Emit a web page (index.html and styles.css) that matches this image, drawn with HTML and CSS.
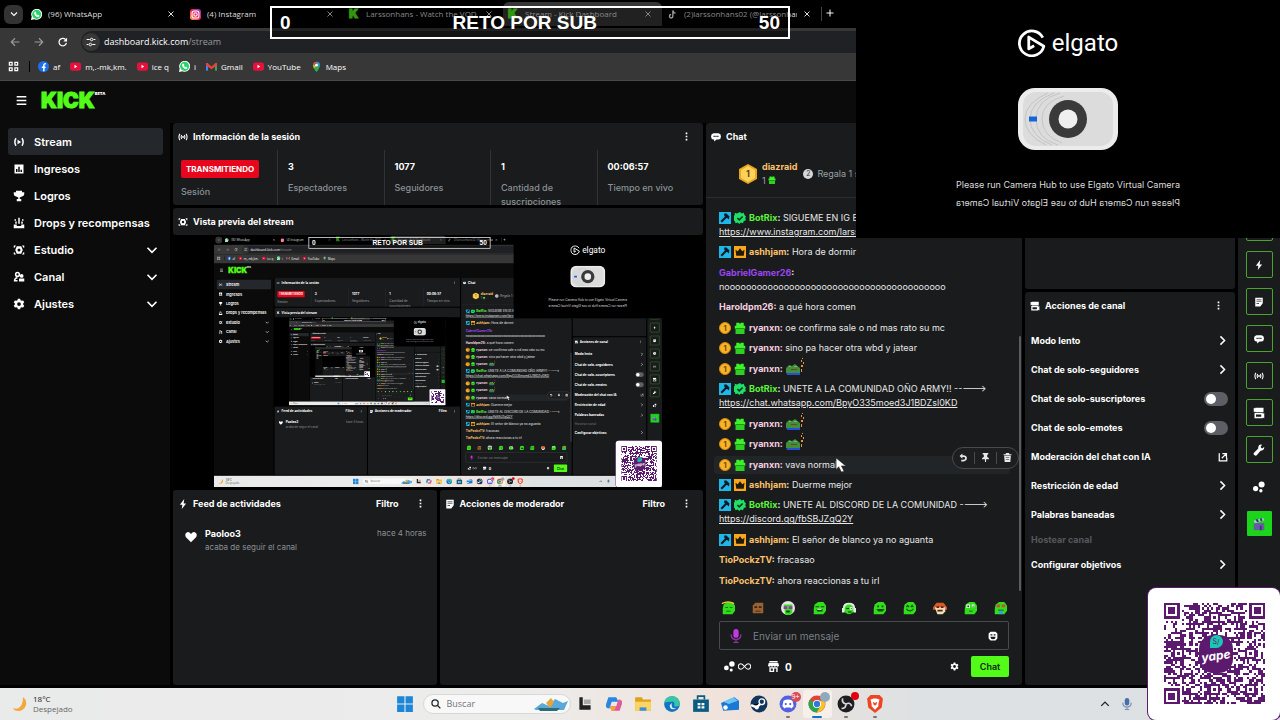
FILE: index.html
```
<!DOCTYPE html>
<html lang="es">
	<head>
		<meta charset="utf-8">
		<meta name="viewport" content="width=device-width,initial-scale=1.0" />
		<title>Stream - Kick Dashboard</title>
		<link rel="stylesheet" href="styles.css">
	</head>
	<body>
		<!-- icons -->
		<svg class="sprite" aria-hidden="true">
			<symbol id="i-live" viewBox="0 0 16 16"><path d="M4 3Q1 8 4 13M12 3Q15 8 12 13" fill="none" stroke="currentColor" stroke-width="2"/><path d="M6 5l5 3-5 3z"/></symbol>
			<symbol id="i-signal" viewBox="0 0 16 16"><path d="M3 3Q0 8 3 13M6 5Q4 8 6 11M10 5Q12 8 10 11M13 3Q16 8 13 13" fill="none" stroke="currentColor" stroke-width="1.7"/><circle cx="8" cy="8" r="1.5"/></symbol>
			<symbol id="i-chart" viewBox="0 0 16 16"><path fill-rule="evenodd" d="M2 2h12v12H2zM4 8v4h2V8zm3-3v7h2V5zm3 4v3h2V9z"/></symbol>
			<symbol id="i-cup" viewBox="0 0 16 16"><path d="M4 1h8v2h3v2q0 3-4 4l-2 1v2h2v3H5v-3h2v-2L5 9Q1 8 1 5V3h3z"/></symbol>
			<symbol id="i-drops" viewBox="0 0 16 16"><path d="M7 1h2v8H7zM2 3h2v2H2zm10 0h2v2h-2zM3 6h2v3H3zm8 0h2v3h-2zM1 10h4v2h6v-2h4v5H1z"/></symbol>
			<symbol id="i-studio" viewBox="0 0 16 16"><path fill-rule="evenodd" d="M1 2h3L2 5H1zm14 0h-3l2 3h1zM1 14h3l-2-3H1zm14 0h-3l2-3h1zM5 3h6l2 5-2 5H5L3 8zm3 3a2 2 0 100 4 2 2 0 000-4z"/></symbol>
			<symbol id="i-people" viewBox="0 0 16 16"><path d="M6 2a2.500 2.500 0 110 5 2.500 2.500 0 010-5zM2 14q0-5 4-5M2 13h4" fill="none" stroke="currentColor" stroke-width="2"/><circle cx="11.500" cy="6.500" r="2.500"/><path d="M8 14v-4h7v4z"/></symbol>
			<symbol id="i-gear" viewBox="0 0 16 16"><path fill-rule="evenodd" d="M6.500 1h3l.5 2 1.500.8 2-.6 1.500 2.600L13.500 7.200v1.600l1.500 1.400-1.500 2.600-2-.6L10 13l-.5 2h-3L6 13l-1.500-.8-2 .6L1 10.200l1.500-1.400V7.200L1 5.800l1.500-2.600 2 .6L6 3zM8 5.500a2.500 2.500 0 100 5 2.500 2.500 0 000-5z"/></symbol>
			<symbol id="i-down" viewBox="0 0 16 16"><path d="M2 5l6 6 6-6" fill="none" stroke="currentColor" stroke-width="2.200"/></symbol>
			<symbol id="i-right" viewBox="0 0 16 16"><path d="M5 2l6 6-6 6" fill="none" stroke="currentColor" stroke-width="2.200"/></symbol>
			<symbol id="i-dots" viewBox="0 0 16 16"><path d="M6.500 1h3v3h-3zm0 5.500h3v3h-3zm0 5.500h3v3h-3z"/></symbol>
			<symbol id="i-chat" viewBox="0 0 16 16"><path fill-rule="evenodd" d="M4 2h8q4 1 4 5 0 4-4 5H9l-4 3v-3H4Q0 11 0 7q0-4 4-5zm0 4v2h2V6zm3 0v2h2V6zm3 0v2h2V6z"/></symbol>
			<symbol id="i-bolt" viewBox="0 0 16 16"><path d="M10 0L3 9h4l-1 7 7-9H9z"/></symbol>
			<symbol id="i-note" viewBox="0 0 16 16"><path fill-rule="evenodd" d="M2 1h12v9l-4 5H2zM4 4v1h8V4zm0 3v1h8V7zm0 3v1h4v-1z"/></symbol>
			<symbol id="i-cards" viewBox="0 0 16 16"><path d="M3 1h11v6H3V6L1 7V1l2 1z"/><path fill-rule="evenodd" d="M2 8h11v1l2-1v7l-2-1v1H2zm2 2v3h7v-3z"/></symbol>
			<symbol id="i-wrench" viewBox="0 0 16 16"><path d="M15 4l-3 2-2-2 2-3Q8 0 7 4v2L1 12q-1 2 1 3t3 0l5-6q5 0 5-5z"/></symbol>
			<symbol id="i-bubbles" viewBox="0 0 16 16"><circle cx="11.500" cy="4.500" r="4"/><circle cx="3.500" cy="10" r="3.500"/><circle cx="10.500" cy="13" r="2.200"/></symbol>
			<symbol id="i-heart" viewBox="0 0 16 16"><path d="M8 15L1 8Q-1 3 3 1.500 6 1 8 4q2-3 5-2.500Q17 3 15 8z"/></symbol>
			<symbol id="i-undo" viewBox="0 0 16 16"><path d="M6 1v3h3q5 1 5 5.500T8 15H4v-3h4q3 0 3-2.500T8 7H6v3L1 5.500z"/></symbol>
			<symbol id="i-pin" viewBox="0 0 16 16"><path d="M3 0h10v2l-2 1v4l3 2v2H9v5H7v-5H2V9l3-2V3L3 2z"/></symbol>
			<symbol id="i-trash" viewBox="0 0 16 16"><path fill-rule="evenodd" d="M5 0h6v2h4v2H1V2h4zM2 5h12l-1 11H3zm3 3v1h6V8zm0 3v1h6v-1z"/></symbol>
			<symbol id="i-out" viewBox="0 0 16 16"><path d="M2 2v12h12V9M6 10l7-7M7 2.500h6.500V9" fill="none" stroke="currentColor" stroke-width="2"/></symbol>
			<symbol id="i-shop" viewBox="0 0 16 16"><path fill-rule="evenodd" d="M2 0h12v2H2zM1 3h14l1 4q-2 3-4 0-2 3-4 0-2 3-4 0-2 3-4 0zm1 6h12v7h-2v-5H9v5H2zm2 2v3h3v-3z"/></symbol>
			<symbol id="i-loop" viewBox="0 0 24 16"><path d="M12 8Q8 3 5.500 3a5 5 0 000 10Q8 13 12 8t6.500-5a5 5 0 010 10Q16 13 12 8z" fill="none" stroke="currentColor" stroke-width="2"/></symbol>
			<symbol id="i-mic" viewBox="0 0 16 16"><rect x="5" y="0" width="6" height="10" rx="3"/><path d="M2.500 6v2q1 4 5.500 4t5.500-4V6M8 12v3M5 15.200h6" fill="none" stroke="currentColor" stroke-width="1.400" opacity=".7"/></symbol>
			<symbol id="i-smile" viewBox="0 0 16 16"><path fill-rule="evenodd" d="M4 1h8l3 3v8l-3 3H4l-3-3V4zm0 4v2h3V5zm5 0v2h3V5zM4 9q0 4 4 4t4-4z"/></symbol>
			<symbol id="i-close" viewBox="0 0 16 16"><path d="M3 3l10 10M13 3L3 13" fill="none" stroke="currentColor" stroke-width="2"/></symbol>
			<symbol id="i-plus" viewBox="0 0 16 16"><path d="M8 1v14M1 8h14" fill="none" stroke="currentColor" stroke-width="2"/></symbol>
			<symbol id="i-back" viewBox="0 0 16 16"><path d="M15 8H2M8 2L2 8l6 6" fill="none" stroke="currentColor" stroke-width="1.800"/></symbol>
			<symbol id="i-reload" viewBox="0 0 16 16"><path d="M13.500 9.500A6 6 0 1112 4" fill="none" stroke="currentColor" stroke-width="2"/><path d="M14.500 1v6h-6z"/></symbol>
			<symbol id="i-tune" viewBox="0 0 16 16"><path d="M1 4h5M12 4h3M1 12h3M10 12h5" stroke="currentColor" stroke-width="1.800"/><circle cx="9" cy="4" r="2" fill="none" stroke="currentColor" stroke-width="1.500"/><circle cx="7" cy="12" r="2" fill="none" stroke="currentColor" stroke-width="1.500"/></symbol>
			<symbol id="i-apps" viewBox="0 0 16 16"><path d="M2 2h4v4H2zm8 0h4v4h-4zM2 10h4v4H2zm8 0h4v4h-4z" fill="none" stroke="currentColor" stroke-width="1.800"/></symbol>
			<symbol id="i-menu" viewBox="0 0 16 16"><path d="M1 2.500h14M1 8h14M1 13.500h14" stroke="currentColor" stroke-width="2"/></symbol>
			<symbol id="i-lens" viewBox="0 0 16 16"><path d="M10.500 10.500L15 15" stroke="currentColor" stroke-width="2"/><circle cx="6.500" cy="6.500" r="5" fill="none" stroke="currentColor" stroke-width="2"/></symbol>
			<symbol id="i-arrow" viewBox="0 0 12 16"><path d="M1 0v13l3-3 3 6 3-1-3-6h5z" fill="#fff" stroke="#222" stroke-width=".6"/></symbol>
			<!-- brands -->
			<symbol id="b-wa" viewBox="0 0 16 16"><path fill="#fff" d="M0 16l1-5a8 8 0 114 4z"/><circle cx="8.200" cy="7.800" r="6.600" fill="#25d366"/><path fill="#fff" d="M5 4l2 0 1 2-1 1 2 2 1-1 2 1v2Q9 13 6 9.500 3.500 7 5 4z"/></symbol>
			<linearGradient id="insta" x1="0" y1="1" x2="1" y2="0"><stop offset="0" stop-color="#fdb03c"/><stop offset=".5" stop-color="#f0245f"/><stop offset="1" stop-color="#8a3ad0"/></linearGradient>
			<symbol id="b-ig" viewBox="0 0 16 16"><rect width="16" height="16" rx="4" fill="url(#insta)"/><rect x="3" y="3" width="10" height="10" rx="3" fill="none" stroke="#fff" stroke-width="1.500"/><circle cx="8" cy="8" r="2.400" fill="none" stroke="#fff" stroke-width="1.500"/></symbol>
			<symbol id="b-tt" viewBox="0 0 16 16"><path d="M8.500 2v8.500a2.500 2.500 0 11-2.500-2.500M8.500 2q1 4 4 4" fill="none" stroke="#fff" stroke-width="2"/></symbol>
			<symbol id="b-yt" viewBox="0 0 16 16"><rect y="2" width="16" height="12" rx="3" fill="#e6103c"/><path fill="#fff" d="M6.500 5.500l4 2.500-4 2.500z"/></symbol>
			<symbol id="b-fb" viewBox="0 0 16 16"><circle cx="8" cy="8" r="8" fill="#1b6fe8"/><path d="M11.500 4Q8.500 3.500 8.500 6.500V15M5.500 9h5.500" fill="none" stroke="#fff" stroke-width="2.200"/></symbol>
			<symbol id="b-gm" viewBox="0 0 16 16"><path fill="#4285f4" d="M0 3h3v11H0z"/><path fill="#34a853" d="M13 3h3v11h-3z"/><path fill="#ea4335" d="M0 3h2l6 5 6-5h2v3l-8 6-8-6z"/></symbol>
			<symbol id="b-map" viewBox="0 0 16 16"><path fill="#34a853" d="M8 16Q3 10 3 6a5 5 0 0110 0q0 4-5 10z"/><path fill="#4285f4" d="M8 1q4 0 5 4L8 9z"/><path fill="#ea4335" d="M3 5q1-4 5-4v4z"/><path fill="#fbbc04" d="M3 5l4 3-3 3z"/><circle cx="8" cy="6" r="2" fill="#fff"/></symbol>
			<!-- chat badges -->
			<symbol id="c-mod" viewBox="0 0 16 16"><path fill="#1fb6e8" d="M0 0h16v16H0z"/><path fill="#0c1a22" d="M7 2l3 0 4 4-1 4-2-2-1 0-6 6-2-2 6-6-1-1z"/></symbol>
			<symbol id="c-ver" viewBox="0 0 16 16"><path fill="#1ee068" d="M8 0l2 2 3-1 1 3 2 2-1 2 1 3-3 1-1 3-3-1-2 2-2-2-3 1-1-3-3-1 1-3-1-2 3-2V1l3 1z"/><path d="M4.500 8l2.500 2.500L11.500 6" fill="none" stroke="#0c2c18" stroke-width="2"/></symbol>
			<symbol id="c-crown" viewBox="0 0 16 16"><path fill="#f7a81b" d="M0 0h16v16H0z"/><path fill="#221a08" d="M2 5l3 2 3-4 3 4 3-2-1 8H3z"/></symbol>
			<symbol id="c-gift" viewBox="0 0 16 16"><path fill="#3df12b" d="M3 1h4l1 2 1-2h4v4h2v4H1V5h2z"/><path fill="#2fd022" d="M2 9h12v7H2z"/><path fill="#1c8a14" d="M2 8h12v1H2z"/></symbol>
			<symbol id="c-hex" viewBox="0 0 20 20"><path fill="#e8a51f" d="M10 0l9 5v10l-9 5-9-5V5z"/><path fill="#fcd25a" d="M10 2l7 4v8l-7 4-7-4V6z"/></symbol>
			<symbol id="c-frog" viewBox="0 0 18 18"><path fill="#2550d4" d="M0 14h14v3H1z"/><path fill="#3f8f3c" d="M0 14v-4l3-3 3 1 3-2 5 4v5H0z"/><path fill="#7db46a" d="M3 8h2v1H3zm5 0h3v1H8z"/><path fill="#7a3e22" d="M5 11h6v1H5z"/><path fill="#e9903a" d="M15 2h1v2h-1zm2 2h1v2h-1zm-2 3h2v2h-2zm0 4h1v3h-1zM16 0h1v1h-1z"/></symbol>
			<!-- emotes -->
			<symbol id="e-base" viewBox="0 0 16 16"><path fill="#32dd1c" d="M3 4l4-3h6l3 4v6l-3 4H2V9z"/></symbol>
			<symbol id="e-1" viewBox="0 0 16 16"><use href="#e-base"/><path d="M1 3q7-4 14 0" stroke="#f2c53c" stroke-width="1.500" fill="none"/><path fill="#0c4a08" d="M5 7h3v1H5zm5 0h3v1h-3zm-4 4h5v1H6z"/></symbol>
			<symbol id="e-2" viewBox="0 0 16 16"><path fill="#9a6232" d="M2 5l3-3h9v12H2z"/><path fill="#3a200e" d="M4 6h3v2H4zm5 0h3v2H9zm-4 5h6v1H5z"/></symbol>
			<symbol id="e-3" viewBox="0 0 16 16"><circle cx="8" cy="8" r="8" fill="#e9e2ea"/><path fill="#32dd1c" d="M3 4h10v9l-3 3H5z"/><path fill="#a92ac0" d="M3 6h4v3H3zm6 0h4v3H9z"/><path fill="#08300a" d="M6 11h4v2H6z"/></symbol>
			<symbol id="e-4" viewBox="0 0 16 16"><use href="#e-base"/><path fill="#0c4a08" d="M4 6h4v1H4zm6 0h4v1h-4zm-5 3h7v3H6z"/><path fill="#fff" d="M6 9h5v1H6z"/></symbol>
			<symbol id="e-5" viewBox="0 0 16 16"><circle cx="8" cy="9" r="6" fill="#32dd1c"/><path fill="#e8e8e8" d="M1 8q0-6 7-6t7 6l-2 0q-1-4-5-4T3 8zM0 8h3v5H0zm13 0h3v5h-3z"/><path fill="#fff" d="M9 7h3v3H9z"/><path fill="#063a06" d="M10 8h1v1h-1zm-5 0h3v1H5zm2 4h4v1H7z"/></symbol>
			<symbol id="e-6" viewBox="0 0 16 16"><use href="#e-base"/><path fill="#0c4a08" d="M6 5h2v2H6zm5 0h2v2h-2zM5 9h9v1l-2 2H7z"/></symbol>
			<symbol id="e-7" viewBox="0 0 16 16"><use href="#e-base"/><path d="M5 7l1.500-2L8 7m2 0l1.500-2L13 7M5 9q4 5 8 0" stroke="#0c4a08" stroke-width="1.200" fill="none"/></symbol>
			<symbol id="e-8" viewBox="0 0 16 16"><path fill="#d65a2a" d="M0 7l4-5h8l4 5v3H0z"/><path fill="#f1ddb8" d="M2 7h12v5l-3 3H5z"/><path fill="#5a2613" d="M4 6h3v2H4zm5 0h3v2H9zm-4 4h6v2H5z"/></symbol>
			<symbol id="e-9" viewBox="0 0 16 16"><use href="#e-base"/><path fill="#fff" d="M4 4h4v4H4zm6 0h3v3h-3z"/><path fill="#0c4a08" d="M5 5h2v2H5zm6 0h1v2h-1zM7 11h4v1H7z"/></symbol>
			<symbol id="e-10" viewBox="0 0 16 16"><use href="#e-base"/><path fill="#d84a2f" d="M4 4h4v3H4zm6 0h4v3h-4z"/><path fill="#0c4a08" d="M6 10h6v1H6z"/><path fill="#3a9bf0" d="M7 11h4v4H7z"/></symbol>
		</svg>

		<div class="screen">
			<div class="tabs">
				<button class="tabMenu" aria-label="Buscar pestañas"><svg class="ic s8"><use href="#i-down"/></svg></button>
				<div class="tab"><svg class="ic s11"><use href="#b-wa"/></svg><span>(96) WhatsApp</span><svg class="ic s8"><use href="#i-close"/></svg></div>
				<div class="tab"><svg class="ic s11"><use href="#b-ig"/></svg><span>(4) Instagram</span><svg class="ic s8"><use href="#i-close"/></svg></div>
				<div class="tab"><b class="k">K</b><span>Larssonhans - Watch the VOD</span><svg class="ic s8"><use href="#i-close"/></svg></div>
				<div class="tab active"><b class="k">K</b><span>Stream - Kick Dashboard</span><svg class="ic s8"><use href="#i-close"/></svg></div>
				<div class="tab"><svg class="ic s11"><use href="#b-tt"/></svg><span>(2)larssonhans02 (@larssonhans</span><svg class="ic s8"><use href="#i-close"/></svg></div>
				<button class="newTab" aria-label="Nueva pestaña"><svg class="ic s8"><use href="#i-plus"/></svg></button>
			</div>
			<div class="toolbar">
				<svg class="ic s10 dim"><use href="#i-back"/></svg>
				<svg class="ic s10 dim flip"><use href="#i-back"/></svg>
				<svg class="ic s10"><use href="#i-reload"/></svg>
				<div class="url"><i><svg class="ic s10"><use href="#i-tune"/></svg></i><span>dashboard.kick.com<em>/stream</em></span></div>
			</div>
			<div class="bookmarks">
				<svg class="ic s11"><use href="#i-apps"/></svg>
				<i class="bar"></i>
				<a href="#"><svg class="ic s11"><use href="#b-fb"/></svg>af</a>
				<a href="#"><svg class="ic s11"><use href="#b-yt"/></svg>m,.-mk,km.</a>
				<a href="#"><svg class="ic s11"><use href="#b-yt"/></svg>ice q</a>
				<a href="#"><svg class="ic s11"><use href="#b-wa"/></svg>i</a>
				<a href="#"><svg class="ic s11"><use href="#b-gm"/></svg>Gmail</a>
				<a href="#"><svg class="ic s11"><use href="#b-yt"/></svg>YouTube</a>
				<a href="#"><svg class="ic s11"><use href="#b-map"/></svg>Maps</a>
			</div>

			<div class="header">
				<svg class="ic s11"><use href="#i-menu"/></svg>
				<div class="logo">KICK<sup>BETA</sup></div>
			</div>

			<div class="main">
				<ul class="side">
					<li class="active"><svg class="ic s12"><use href="#i-live"/></svg><span>Stream</span></li>
					<li><svg class="ic s12"><use href="#i-chart"/></svg><span>Ingresos</span></li>
					<li><svg class="ic s12"><use href="#i-cup"/></svg><span>Logros</span></li>
					<li><svg class="ic s12"><use href="#i-drops"/></svg><span>Drops y recompensas</span></li>
					<li><svg class="ic s12"><use href="#i-studio"/></svg><span>Estudio</span><svg class="ic s12"><use href="#i-down"/></svg></li>
					<li><svg class="ic s12"><use href="#i-people"/></svg><span>Canal</span><svg class="ic s12"><use href="#i-down"/></svg></li>
					<li><svg class="ic s12"><use href="#i-gear"/></svg><span>Ajustes</span><svg class="ic s12"><use href="#i-down"/></svg></li>
				</ul>

				<div class="center">
					<div class="panel info">
						<h2><svg class="ic s10"><use href="#i-signal"/></svg><span>Información de la sesión</span><svg class="ic s9"><use href="#i-dots"/></svg></h2>
						<div class="stats">
							<div class="stat"><span class="onair">TRANSMITIENDO</span><p>Sesión</p></div>
							<div class="stat"><b>3</b><p>Espectadores</p></div>
							<div class="stat"><b>1077</b><p>Seguidores</p></div>
							<div class="stat"><b>1</b><p>Cantidad de suscripciones</p></div>
							<div class="stat"><b>00:06:57</b><p>Tiempo en vivo</p></div>
						</div>
					</div>
					<div class="preview">
						<h2 class="panel"><svg class="ic s10"><use href="#i-studio"/></svg><span>Vista previa del stream</span></h2>
						<div class="video"><div class="thumb"></div></div>
					</div>
					<div class="feeds">
						<div class="panel">
							<h2><svg class="ic s10"><use href="#i-bolt"/></svg><span>Feed de actividades</span><button>Filtro</button><svg class="ic s9"><use href="#i-dots"/></svg></h2>
							<div class="event">
								<svg class="ic s12"><use href="#i-heart"/></svg>
								<div><b>Paoloo3</b><p>acaba de seguir el canal</p></div>
								<time>hace 4 horas</time>
							</div>
						</div>
						<div class="panel">
							<h2><svg class="ic s10"><use href="#i-note"/></svg><span>Acciones de moderador</span><button>Filtro</button><svg class="ic s9"><use href="#i-dots"/></svg></h2>
						</div>
					</div>
				</div>

				<div class="panel chat">
					<h2><svg class="ic s10"><use href="#i-chat"/></svg><span>Chat</span></h2>
					<div class="ranking">
						<i class="hex"><svg class="ic s20"><use href="#c-hex"/></svg><b>1</b></i>
						<div><b class="gold">diazraid</b><p>1 <svg class="ic s8"><use href="#c-gift"/></svg></p></div>
						<i class="second">2</i>
						<span>Regala 1 su</span>
					</div>
					<ul class="msgs">
						<li><svg class="badge"><use href="#c-mod"/></svg><svg class="badge"><use href="#c-ver"/></svg><b class="green">BotRix</b><b>:</b> SIGUEME EN IG BEB<br><a href="#">https://www.instagram.com/larsson</a></li>
						<li><svg class="badge"><use href="#c-mod"/></svg><svg class="badge"><use href="#c-crown"/></svg><b class="gold">ashhjam</b><b>:</b> Hora de dormir</li>
						<li><b class="violet">GabrielGamer26</b><b>:</b><br>nooooooooooooooooooooooooooooooooooooooooo</li>
						<li><b class="pink">Haroldpm26:</b> a qué hora comen</li>
						<li><i class="coin">1</i><svg class="badge"><use href="#c-gift"/></svg><b class="pink">ryanxn:</b> oe confirma sale o nd mas rato su mc</li>
						<li><i class="coin">1</i><svg class="badge"><use href="#c-gift"/></svg><b class="pink">ryanxn:</b> sino pa hacer otra wbd y jatear</li>
						<li><i class="coin">1</i><svg class="badge"><use href="#c-gift"/></svg><b class="pink">ryanxn:</b> <svg class="frog"><use href="#c-frog"/></svg></li>
						<li><svg class="badge"><use href="#c-mod"/></svg><svg class="badge"><use href="#c-ver"/></svg><b class="green">BotRix</b><b>:</b> UNETE A LA COMUNIDAD OÑO ARMY!! -----&gt;<br><a href="#">https://chat.whatsapp.com/BpyO335moed3J1BDZsl0KD</a></li>
						<li><i class="coin">1</i><svg class="badge"><use href="#c-gift"/></svg><b class="pink">ryanxn:</b> <svg class="frog"><use href="#c-frog"/></svg></li>
						<li><i class="coin">1</i><svg class="badge"><use href="#c-gift"/></svg><b class="pink">ryanxn:</b> <svg class="frog"><use href="#c-frog"/></svg></li>
						<li class="hover"><i class="coin">1</i><svg class="badge"><use href="#c-gift"/></svg><b class="pink">ryanxn:</b> vava normal<svg class="cursor"><use href="#i-arrow"/></svg>
							<div class="tools">
								<button aria-label="Responder"><svg class="ic s9"><use href="#i-undo"/></svg></button>
								<button aria-label="Fijar"><svg class="ic s9"><use href="#i-pin"/></svg></button>
								<button aria-label="Borrar"><svg class="ic s9"><use href="#i-trash"/></svg></button>
							</div>
						</li>
						<li><svg class="badge"><use href="#c-mod"/></svg><svg class="badge"><use href="#c-crown"/></svg><b class="gold">ashhjam</b><b>:</b> Duerme mejor</li>
						<li><svg class="badge"><use href="#c-mod"/></svg><svg class="badge"><use href="#c-ver"/></svg><b class="green">BotRix</b><b>:</b> UNETE AL DISCORD DE LA COMUNIDAD ----&gt;<br><a href="#">https://discord.gg/fbSBJZqQ2Y</a></li>
						<li><svg class="badge"><use href="#c-mod"/></svg><svg class="badge"><use href="#c-crown"/></svg><b class="gold">ashhjam</b><b>:</b> El señor de blanco ya no aguanta</li>
						<li><b class="gold">TioPockzTV</b><b>:</b> fracasao</li>
						<li><b class="gold">TioPockzTV</b><b>:</b> ahora reaccionas a tu irl</li>
					</ul>
					<div class="emotes">
						<svg><use href="#e-1"/></svg><svg><use href="#e-2"/></svg><svg><use href="#e-3"/></svg><svg><use href="#e-4"/></svg><svg><use href="#e-5"/></svg><svg><use href="#e-6"/></svg><svg><use href="#e-7"/></svg><svg><use href="#e-8"/></svg><svg><use href="#e-9"/></svg><svg><use href="#e-10"/></svg>
					</div>
					<label class="write">
						<svg class="ic s14 mic"><use href="#i-mic"/></svg>
						<input type="text" placeholder="Enviar un mensaje" aria-label="Enviar un mensaje">
						<svg class="ic s10"><use href="#i-smile"/></svg>
					</label>
					<div class="send">
						<svg class="ic s11"><use href="#i-bubbles"/></svg>
						<svg class="loop"><use href="#i-loop"/></svg>
						<svg class="ic s11 shop"><use href="#i-shop"/></svg>
						<b>0</b>
						<svg class="ic s9"><use href="#i-gear"/></svg>
						<button>Chat</button>
					</div>
					<i class="scroll"></i>
				</div>

				<div class="right">
					<div class="panel"></div>
					<div class="panel actions">
						<h2><svg class="ic s10"><use href="#i-cards"/></svg><span>Acciones de canal</span><svg class="ic s9"><use href="#i-dots"/></svg></h2>
						<ul>
							<li><span>Modo lento</span><svg class="ic s11"><use href="#i-right"/></svg></li>
							<li><span>Chat de solo-seguidores</span><svg class="ic s11"><use href="#i-right"/></svg></li>
							<li><label>Chat de solo-suscriptores<input type="checkbox" class="toggle"></label></li>
							<li><label>Chat de solo-emotes<input type="checkbox" class="toggle"></label></li>
							<li><span>Moderación del chat con IA</span><svg class="ic s10"><use href="#i-out"/></svg></li>
							<li><span>Restricción de edad</span><svg class="ic s11"><use href="#i-right"/></svg></li>
							<li><span>Palabras baneadas</span><svg class="ic s11"><use href="#i-right"/></svg></li>
							<li class="off"><span>Hostear canal</span></li>
							<li><span>Configurar objetivos</span><svg class="ic s11"><use href="#i-right"/></svg></li>
						</ul>
					</div>
				</div>

				<div class="panel rail">
					<button aria-label="Información"><svg class="ic s10"><use href="#i-signal"/></svg></button>
					<button aria-label="Vista previa"><svg class="ic s10"><use href="#i-studio"/></svg></button>
					<button aria-label="Canal"><svg class="ic s10"><use href="#i-people"/></svg></button>
					<button aria-label="Feed"><svg class="ic s10"><use href="#i-bolt"/></svg></button>
					<button aria-label="Moderador"><svg class="ic s10"><use href="#i-note"/></svg></button>
					<button aria-label="Chat"><svg class="ic s10"><use href="#i-chat"/></svg></button>
					<button aria-label="Sesión"><svg class="ic s10"><use href="#i-signal"/></svg></button>
					<button aria-label="Acciones"><svg class="ic s12"><use href="#i-cards"/></svg></button>
					<button aria-label="Herramientas"><svg class="ic s12"><use href="#i-wrench"/></svg></button>
					<button class="plain" aria-label="Burbujas"><svg class="ic s12"><use href="#i-bubbles"/></svg></button>
					<button class="clip" aria-label="Clips"><svg class="ic s14" viewBox="0 0 16 16"><path fill="#6b5aa8" d="M2 7h12v8H2z"/><path fill="#8fd8b8" d="M2 4l11-3 1 3L3 7z"/><path fill="#3b3470" d="M4 3l2 3 2-1-2-3zm5-1l1 3 2-1-1-3zM9 10h2v5H9z"/></svg></button>
				</div>
			</div>

			<div class="taskbar">
				<div class="weather">
					<svg class="moon" viewBox="0 0 16 16"><path fill="#f5a83a" d="M11 1q4 3 3 8-2 6-8 6-4 0-5-3 4 2 7-1t3-10z"/></svg>
					<div>18°C<p>Despejado</p></div>
				</div>
				<div class="apps">
					<i><svg viewBox="0 0 16 16"><path fill="#1c86d8" d="M1 1h6.500v6.500H1zM8.500 1H15v6.500H8.500zM1 8.500h6.500V15H1zM8.500 8.500H15V15H8.500z"/></svg></i>
					<label class="search"><svg class="ic s10"><use href="#i-lens"/></svg><input type="text" placeholder="Buscar" aria-label="Buscar"><svg class="scene" viewBox="0 0 34 16"><path fill="#5aa9d8" d="M0 13l8-6 7 3 6-7 8 4 5-2-4 9H2z"/><path fill="#e5a53a" d="M12 7l5-5 3 4-4 6z"/><path fill="#2c6c78" d="M4 12h22l-3 3H6z"/></svg></label>
					<i><svg viewBox="0 0 16 16"><path fill="#222" d="M3 2h3v7h7v4H3z"/><path fill="#aaa" d="M7 4h6v4H7z"/></svg></i>
					<i><svg viewBox="0 0 16 16"><path fill="#2a86e0" d="M3 2h7l2 4H6L4 12Q0 12 1 8z"/><path fill="#e05a9a" d="M13 14H6l-2-4h6l2-6q4 0 3 4z"/><path fill="#f2a33a" d="M6 14l-2-4h6l-2 4z"/></svg></i>
					<i><svg viewBox="0 0 16 16"><path fill="#e0a11c" d="M1 2h6l1 2h7v10H1z"/><path fill="#fcd462" d="M1 6h14v8H1z"/><path fill="#3a8ee0" d="M5 11h6v3H5z"/></svg></i>
					<i><svg viewBox="0 0 16 16"><circle cx="8" cy="8" r="7" fill="#1474c4"/><path fill="#37c7a4" d="M1 7q1-6 7-6t7 6q0 4-5 3 1-5-3-4-4 0-6 1z"/><path fill="#e8f4f8" d="M8 7q-2 5 4 5-6 2-6-3z"/></svg></i>
					<i><svg viewBox="0 0 16 16"><path fill="#0b5c82" d="M1 4h14v11H1z"/><path fill="none" stroke="#0b5c82" stroke-width="1.500" d="M5 4V1h6v3"/><path fill="#fff" d="M5 7h2.500v2H5zM8.500 7H11v2H8.500zM5 10h2.500v2H5zM8.500 10H11v2H8.500z"/></svg></i>
					<i><svg viewBox="0 0 16 16"><path fill="#1b78d4" d="M0 7l12-5 4 3v8L2 14z"/><path fill="#6cc4f4" d="M2 6l9-4 4 3-8 3z"/><circle cx="4" cy="11" r="2" fill="#fff"/></svg></i>
					<i><svg viewBox="0 0 16 16"><circle cx="8" cy="8" r="7.500" fill="#12355c"/><path stroke="#fff" stroke-width="2" d="M1 9l5 2 4-4"/><circle cx="10.500" cy="6" r="2.500" fill="#12355c" stroke="#fff" stroke-width="1.200"/><circle cx="6" cy="11" r="1.800" fill="#fff"/></svg></i>
					<i class="open"><svg viewBox="0 0 16 16"><circle cx="8" cy="8" r="7.500" fill="#5361e0"/><path fill="#fff" d="M4 5q4-2 8 0l1 5-2 2-1-1H6l-1 1-2-2z"/><circle cx="6" cy="8" r="1" fill="#5361e0"/><circle cx="10" cy="8" r="1" fill="#5361e0"/></svg><small>9+</small></i>
					<i class="current"><svg viewBox="0 0 16 16"><circle cx="8" cy="8" r="7.500" fill="#e04434"/><path fill="#2da452" d="M8 8L1.500 4.200A7.500 7.500 0 008 15.500L11 10z"/><path fill="#f7c428" d="M8 8l3 2-3.200 5.500A7.500 7.500 0 0014.500 5H8z"/><circle cx="8" cy="8" r="3.600" fill="#fff"/><circle cx="8" cy="8" r="2.800" fill="#3078e0"/></svg><small></small></i>
					<i class="open rec"><svg viewBox="0 0 16 16"><circle cx="8" cy="8" r="7.500" fill="#1e1e22"/><path d="M8 8Q4 7 5 3M8 8q4-2 5 2M8 8q0 4-4 4" fill="none" stroke="#d8d8d8" stroke-width="1.500"/></svg><small></small></i>
					<i class="open"><svg viewBox="0 0 16 16"><path fill="#ee4423" d="M4 0h8l3 3-1 8-6 5-6-5-1-8z"/><path fill="#fff" d="M4 4l3-1h2l3 1-1 4 0 2-3 3-3-3V8z"/><path fill="#ee4423" d="M6 6l2 1 2-1-1 3H7z"/></svg></i>
				</div>
				<div class="tray"><svg class="ic s10 up"><use href="#i-down"/></svg><svg class="ic s12"><use href="#i-mic"/></svg></div>
			</div>

			<!-- stream overlays -->
			<div class="facecam">
				<div class="brand"><svg viewBox="0 0 26 26"><path d="M23 8A11.500 11.500 0 1024 16L10 7.500v11l5-3" fill="none" stroke="#fff" stroke-width="2.600" stroke-linejoin="round"/></svg><span>elgato</span></div>
				<svg class="camera" viewBox="0 0 100 62">
					<rect width="100" height="62" rx="17" fill="#ececec"/>
					<rect x="5" y="4" width="90" height="54" rx="13" fill="#dcdcdd"/>
					<g fill="none" stroke="#c4c5c6" stroke-width="1"><path d="M42 5Q18 12 18 31t22 26M36 5Q12 14 12 31t22 26M30 5Q7 15 7 31t21 26M46 8Q24 14 24 31t20 24"/></g>
					<circle cx="50" cy="31" r="19" fill="#3a3a3b"/><circle cx="50" cy="31" r="9.500" fill="#efefef"/>
					<rect x="11" y="28.500" width="8" height="5" fill="#1565d8"/>
				</svg>
				<p>Please run Camera Hub to use Elgato Virtual Camera</p>
				<p class="mirror">Please run Camera Hub to use Elgato Virtual Camera</p>
			</div>
			<div class="goal"><span>0</span><span>RETO POR SUB</span><span>50</span></div>
			<div class="yape">
				<svg viewBox="0 0 45 45" shape-rendering="crispEdges"><path class="qr" fill="#5b1a6e"/></svg>
				<div class="yapeLogo"><i>S/</i><b>yape</b></div>
			</div>
		</div>

		<script>
			// QR: three finders, alignment marks and filled modules
			var size = 45
			var seed = 7
			var finders = [[0, 0], [38, 0], [0, 38]]
			var marks = [[22, 6], [6, 22], [38, 22], [22, 38], [38, 38]]

			var random = function() {
				seed = (seed * 16807) % 2147483647
				return seed / 2147483647
			}

			var isDark = function(x, y) {
				var noise = random() < 0.52
				for (var i = 0; i < finders.length; i++) {
					var r = Math.max(Math.abs(x - finders[i][0] - 3), Math.abs(y - finders[i][1] - 3))
					if (r < 5) {
						return r < 2 || r == 3
					}
				}
				for (var j = 0; j < marks.length; j++) {
					var m = Math.max(Math.abs(x - marks[j][0]), Math.abs(y - marks[j][1]))
					if (m < 3) {
						return m != 1
					}
				}
				return noise
			}

			var d = ''
			for (var y = 0; y < size; y++) {
				for (var x = 0; x < size; x++) {
					if (isDark(x, y)) {
						d += 'M' + x + ' ' + y + 'h1v1h-1z'
					}
				}
			}
			document.querySelector('.qr').setAttribute('d', d)

			// the preview shows the screen itself, three times deep
			var source = document.querySelector('.screen').cloneNode(true)

			var showPreview = function(thumb, depth) {
				var copy = source.cloneNode(true)
				copy.setAttribute('aria-hidden', 'true')
				copy.inert = true
				copy.style.width = window.innerWidth + 'px'
				copy.style.transform = 'scale(' + thumb.clientWidth / window.innerWidth + ')'
				thumb.replaceChildren(copy)
				if (depth > 1) {
					showPreview(copy.querySelector('.thumb'), depth - 1)
				}
			}

			showPreview(document.querySelector('.thumb'), 3)
			window.addEventListener('resize', function() {
				showPreview(document.querySelector('.thumb'), 3)
			})
		</script>
	</body>
</html>
```
FILE: styles.css
```
*{
	padding: 0;
	margin: 0;
	box-sizing: border-box;
}
body{
	background-color: #000;
	color: #fff;
	font-family: Inter, "Liberation Sans", sans-serif;
	font-size: 9px;
	line-height: 14px;
}
ul{
	list-style: none;
}
i, em{
	font-style: normal;
}
a{
	color: inherit;
}
button{
	border: none;
	background: none;
	color: inherit;
	font: inherit;
	cursor: pointer;
}
input{
	min-width: 0;
	flex: 1;
	border: none;
	outline: none;
	background: none;
	color: inherit;
	font: inherit;
}
.sprite{
	position: absolute;
	width: 0;
	height: 0;
}
.screen{
	position: relative;
	height: 100vh;
	min-height: 600px;
	display: flex;
	flex-direction: column;
	overflow: hidden;
	background-color: #000;
}

/* icons */
.ic{
	flex: none;
	fill: currentColor;
}
.s8{ width: 8px; height: 8px; }
.s9{ width: 9px; height: 9px; }
.s10{ width: 10px; height: 10px; }
.s11{ width: 11px; height: 11px; }
.s12{ width: 12px; height: 12px; }
.s14{ width: 14px; height: 14px; }
.s20{ width: 20px; height: 20px; }
.flip{
	transform: rotate(180deg);
}
.up{
	transform: rotate(180deg);
}

/* browser */
.tabs, .toolbar, .bookmarks{
	flex: none;
	display: flex;
	align-items: center;
	font-family: "Open Sans", "Noto Sans", sans-serif;
	font-size: 8px;
}
.tabs{
	height: 28px;
	padding-left: 4px;
}
.tabMenu{
	width: 19px;
	height: 19px;
	margin-right: 3px;
	border-radius: 6px;
	background-color: #333;
	display: flex;
	align-items: center;
	justify-content: center;
}
.tab{
	width: 159px;
	height: 24px;
	padding: 0 10px 0 5px;
	display: flex;
	align-items: center;
	gap: 6px;
	border-radius: 6px 6px 0 0;
	color: #ddd;
}
.tab span{
	flex: 1;
	overflow: hidden;
	white-space: nowrap;
}
.tab.active{
	background-color: #373737;
}
.k{
	width: 11px;
	font: 900 12px/14px Inter, sans-serif;
	color: #53fc18;
	-webkit-text-stroke: 1px #53fc18;
}
.newTab{
	padding-left: 4px;
	height: 14px;
	border-left: 1px solid #444;
}
.toolbar{
	height: 27px;
	padding-left: 10px;
	gap: 14px;
	background-color: #373737;
	font-size: 9px;
}
.dim{
	opacity: .5;
}
.url{
	flex: 1;
	height: 22px;
	margin-left: -1px;
	padding-left: 1px;
	display: flex;
	align-items: center;
	gap: 4px;
	border-radius: 11px 0 0 11px;
	background-color: #202124;
}
.url i{
	width: 18px;
	height: 18px;
	border-radius: 9px;
	background-color: #373737;
	display: flex;
	align-items: center;
	justify-content: center;
}
.url em{
	color: #999;
}
.bookmarks{
	height: 26px;
	padding: 0 0 2px 8px;
	gap: 10px;
	background-color: #373737;
	border-bottom: 1px solid #484848;
}
.bookmarks a{
	display: flex;
	align-items: center;
	gap: 4px;
	text-decoration: none;
}
.bar{
	width: 1px;
	height: 11px;
	margin-right: -2px;
	background-color: #000;
}

/* dashboard */
.header{
	flex: none;
	height: 42px;
	padding: 0 0 3px 16px;
	display: flex;
	align-items: center;
	gap: 14px;
	background-color: #0b0b0b;
}
.logo{
	display: flex;
	font-size: 21px;
	line-height: 24px;
	font-weight: 900;
	color: #53fc18;
	-webkit-text-stroke: 1px #53fc18;
}
.logo sup{
	font-size: 4px;
	line-height: 10px;
	color: #fff;
	-webkit-text-stroke: 0;
}
.main{
	flex: 1;
	min-height: 0;
	padding-bottom: 3px;
	display: grid;
	grid-template-columns: 170px minmax(0, 530fr) minmax(0, 316fr) minmax(0, 210fr) 42px;
	grid-template-rows: 100%;
	gap: 3px;
}
.panel{
	border-radius: 3px;
	background-color: #191b1c;
}
.side{
	padding: 5px 7px 0 8px;
	background-color: #0b0b0b;
	font-size: 11px;
	font-weight: 600;
}
.side li{
	height: 27px;
	padding: 0 5px;
	display: flex;
	align-items: center;
	gap: 9px;
	border-radius: 3px;
}
.side li.active{
	background-color: #24272b;
}
.side span{
	flex: 1;
}
h2{
	height: 27px;
	padding: 0 12px 0 5px;
	display: flex;
	align-items: center;
	gap: 5px;
	font-size: 9px;
	font-weight: 700;
}
h2 span{
	flex: 1;
}
h2 button{
	margin-right: 12px;
}
.center{
	display: flex;
	flex-direction: column;
	gap: 3px;
}
.info{
	height: 82px;
	overflow: hidden;
}
.stats{
	display: grid;
	grid-template-columns: 104px repeat(4, 1fr);
}
.stat{
	height: 60px;
	padding: 10px 0 0 10px;
	border-left: 1px solid #303335;
}
.stat:first-child{
	padding-left: 8px;
	border-left: none;
}
.stat p{
	padding-top: 7px;
	color: #8b9197;
	font-weight: 500;
}
.onair{
	display: inline-block;
	height: 18px;
	padding: 0 5px;
	border-radius: 2px;
	background-color: #e7061b;
	font-size: 8px;
	line-height: 18px;
	font-weight: 700;
}
.preview{
	flex: 1;
	min-height: 0;
	display: flex;
	flex-direction: column;
}
.video{
	flex: 1;
	min-height: 0;
	display: flex;
	justify-content: center;
}
.thumb{
	position: relative;
	height: 100%;
	aspect-ratio: 16 / 9;
	overflow: hidden;
}
.thumb .screen{
	position: absolute;
	top: 0;
	left: 0;
	transform-origin: 0 0;
}
.feeds{
	height: 195px;
	display: grid;
	grid-template-columns: 1fr 1fr;
	gap: 3px;
}
.event{
	padding: 10px 10px 0 12px;
	display: flex;
	gap: 8px;
	color: #8b9197;
	font-size: 8px;
	line-height: 13px;
}
.event .ic{
	margin-top: 4px;
	color: #fff;
}
.event div{
	flex: 1;
}
.event b{
	color: #fff;
	font-size: 9px;
}

/* chat */
.chat{
	position: relative;
	display: flex;
	flex-direction: column;
	padding: 0 13px 8px;
}
.chat h2{
	margin: 0 -13px;
}
.ranking{
	height: 48px;
	margin: 0 -9px 0 -13px;
	padding-left: 32px;
	display: flex;
	align-items: center;
	gap: 4px;
	border-bottom: 1px solid #2b2e30;
	color: #9ba1a6;
	white-space: nowrap;
}
.hex{
	position: relative;
	height: 20px;
}
.hex b{
	position: absolute;
	inset: 0;
	line-height: 20px;
	text-align: center;
	color: #6b430a;
}
.second{
	width: 10px;
	height: 10px;
	margin-left: 2px;
	border-radius: 5px;
	background-color: #d5d8da;
	color: #333;
	font-size: 7px;
	line-height: 10px;
	text-align: center;
}
.msgs{
	flex: 1;
	padding: 13px 0 10px;
	display: flex;
	flex-direction: column;
	justify-content: space-between;
	color: #e8e8e8;
	white-space: nowrap;
}
.badge, .coin{
	display: inline-block;
	width: 12px;
	height: 12px;
	margin: 1px 3px 0 0;
	vertical-align: top;
}
.coin{
	border-radius: 6px;
	border: 1px solid #d8880c;
	background-color: #f8b429;
	color: #7a4a08;
	font-size: 8px;
	line-height: 10px;
	font-weight: 700;
	text-align: center;
}
.frog{
	width: 18px;
	height: 18px;
	margin: -4px 0 0 3px;
	position: absolute;
}
.green{ color: #5cf53a; }
.gold{ color: #fbc26c; }
.violet{ color: #9b45f0; }
.pink{ color: #f6cfe0; }
.hover{
	position: relative;
	margin: -2px -1px -2px -5px;
	padding: 2px 5px;
	border-radius: 3px;
	background-color: #222527;
}
.cursor{
	position: absolute;
	top: 2px;
	width: 11px;
	height: 14px;
	margin-left: -2px;
}
.tools{
	position: absolute;
	right: -9px;
	top: -9px;
	height: 22px;
	display: flex;
	align-items: center;
	border: 1px solid #484b4e;
	border-radius: 11px;
	background-color: #1c1e20;
}
.tools button{
	width: 21px;
	height: 12px;
	line-height: 9px;
}
.tools button + button{
	width: 22px;
	border-left: 1px solid #484b4e;
}
.emotes{
	height: 20px;
	margin-bottom: 3px;
	padding: 0 2px;
	display: flex;
	align-items: center;
	justify-content: space-between;
}
.emotes svg{
	width: 14px;
	height: 14px;
}
.write{
	height: 29px;
	margin-bottom: 6px;
	padding: 0 10px 0 9px;
	display: flex;
	align-items: center;
	gap: 10px;
	border: 1px solid #484b4e;
	border-radius: 2px;
	font-size: 10px;
}
.write input::placeholder{
	color: #7a8085;
}
.mic{
	color: #c23ae0;
}
.send{
	height: 21px;
	padding-left: 5px;
	display: flex;
	align-items: center;
	gap: 3px;
	font-size: 10px;
}
.loop{
	width: 13px;
	height: 9px;
}
.shop{
	margin: 0 3px 0 14px;
}
.send b{
	flex: 1;
}
.send button{
	width: 38px;
	height: 21px;
	margin-left: 9px;
	border-radius: 2px;
	background-color: #53fc18;
	color: #10290a;
	font-size: 9px;
	font-weight: 600;
}
.scroll{
	position: absolute;
	top: 213px;
	right: 1px;
	bottom: 94px;
	width: 2px;
	border-radius: 1px;
	background-color: #5a5d60;
}

/* channel actions */
.right{
	display: grid;
	grid-template-rows: 166px 1fr;
	gap: 3px;
}
.actions ul{
	padding: 7px 7px 0 6px;
	font-weight: 700;
}
.actions li{
	height: 29px;
	display: flex;
	align-items: center;
	justify-content: space-between;
}
.actions li.off{
	height: 21px;
	color: #55595c;
}
.actions label{
	flex: 1;
	display: flex;
	align-items: center;
	justify-content: space-between;
}
.toggle{
	appearance: none;
	flex: none;
	width: 24px;
	height: 14px;
	padding: 2px;
	border-radius: 7px;
	background-color: #5c5f65;
}
.toggle::before{
	content: "";
	display: block;
	width: 10px;
	height: 10px;
	border-radius: 5px;
	background-color: #fff;
}
.rail{
	padding-top: 17px;
	display: flex;
	flex-direction: column;
	align-items: center;
	gap: 10px;
}
.rail button{
	flex: none;
	width: 27px;
	height: 27px;
	display: flex;
	align-items: center;
	justify-content: center;
	border: 1px solid #4aa32e;
	border-radius: 2px;
}
.rail .plain{
	border: none;
}
.rail .clip{
	border: 1px solid #191b1c;
	background-color: #1bd41b;
}

/* taskbar */
.taskbar{
	flex: none;
	height: 32px;
	display: grid;
	grid-template-columns: 1fr auto 1fr;
	align-items: center;
	background: linear-gradient(90deg, #e9eaea, #ececeb 40%, #f0e2da 58%, #dde1e3 72%, #dce0e1);
	color: #222;
	font-family: "Open Sans", "Noto Sans", sans-serif;
	font-size: 8px;
	line-height: 10px;
}
.weather{
	padding-left: 12px;
	display: flex;
	align-items: center;
	gap: 5px;
}
.weather p{
	color: #666;
}
.moon{
	width: 16px;
	height: 16px;
}
.apps{
	display: flex;
	align-items: center;
}
.apps i{
	position: relative;
	width: 29px;
	height: 28px;
	display: flex;
	align-items: center;
	justify-content: center;
}
.apps i svg{
	width: 18px;
	height: 18px;
}
.search{
	width: 148px;
	height: 20px;
	margin-left: 3px;
	padding: 0 2px 0 7px;
	display: flex;
	align-items: center;
	gap: 6px;
	border: 1px solid #d8d8d8;
	border-radius: 10px;
	background-color: #f8f8f8;
	font-size: 9px;
}
.search .scene{
	width: 34px;
	height: 16px;
}
.open::after, .current::after{
	content: "";
	position: absolute;
	bottom: 0;
	width: 4px;
	height: 2px;
	border-radius: 1px;
	background-color: #777;
}
.current{
	background-color: #f6efea;
	border-radius: 3px;
}
.current::after{
	width: 10px;
	background-color: #1672c8;
}
.apps small{
	position: absolute;
	top: 2px;
	right: 2px;
	width: 10px;
	height: 10px;
	border-radius: 5px;
	background-color: #d84a58;
	color: #fff;
	font-size: 7px;
	text-align: center;
}
.apps .current small{
	background-color: #8fa9bf;
}
.apps .rec small{
	width: 8px;
	height: 8px;
	background-color: #e00010;
}
.tray{
	padding-right: 147px;
	display: flex;
	justify-content: flex-end;
	align-items: center;
	gap: 11px;
}
.tray .s12{
	color: #4a6fa8;
}

/* overlays */
.facecam{
	position: absolute;
	top: 0;
	right: 0;
	width: 424px;
	height: 238px;
	padding-top: 28px;
	display: flex;
	flex-direction: column;
	align-items: center;
	background-color: #000;
	color: #ddd;
}
.brand{
	display: flex;
	align-items: center;
	gap: 6px;
	color: #fff;
	font: 24px/30px Roboto, sans-serif;
}
.brand svg{
	width: 28px;
	height: 28px;
}
.camera{
	width: 100px;
	height: 62px;
	margin: 30px 0 26px;
}
.facecam p{
	font-size: 9px;
	line-height: 18px;
}
.mirror{
	transform: scaleX(-1);
}
.goal{
	position: absolute;
	top: 6px;
	left: 270px;
	width: 520px;
	height: 33px;
	padding: 0 8px;
	display: flex;
	justify-content: space-between;
	border: 2px solid #fff;
	background-color: rgba(0,0,0,0.4);
	font: bold 19px/30px "Liberation Sans", Arial, sans-serif;
}
.yape{
	position: absolute;
	right: 0;
	bottom: 0;
	width: 132px;
	height: 132px;
	padding: 15px 15px 16px 16px;
	border-radius: 8px;
	background-color: #fff;
	box-shadow: 0 0 0 1px #5b1a6e;
}
.yape svg{
	display: block;
	width: 101px;
	height: 101px;
}
.yapeLogo{
	position: absolute;
	top: 47px;
	left: 51px;
	width: 34px;
	height: 38px;
	border-radius: 14px;
	background-color: #5b1a6e;
	text-align: center;
}
.yapeLogo i{
	display: block;
	width: 13px;
	height: 13px;
	margin: 0 auto;
	border-radius: 7px 7px 7px 0;
	background-color: #19c8b4;
	color: #5b1a6e;
	font-size: 7px;
	line-height: 13px;
}
.yapeLogo b{
	display: block;
	font-size: 12px;
	line-height: 16px;
	font-style: italic;
	transform: rotate(-8deg);
}
```
